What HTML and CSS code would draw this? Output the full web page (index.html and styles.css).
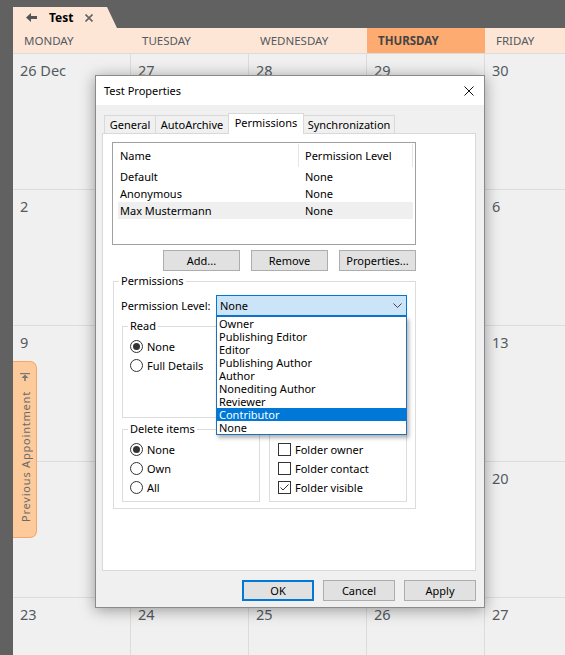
FILE: index.html
```html
<!DOCTYPE html>
<html>
<head>
<meta charset="utf-8">
<link rel="stylesheet" href="styles.css">
</head>
<body>
<div class="app">
  <div class="topbar">
    <div class="doctab">
      <svg class="back" viewBox="0 0 11 9"><path d="M0 4.5 L5 0 L5 3 L11 3 L11 6 L5 6 L5 9 Z" fill="#555"/></svg>
      <span class="doctab-title">Test</span>
      <svg class="doctab-close" viewBox="0 0 8 8"><path d="M0.5 0.5 L7.5 7.5 M7.5 0.5 L0.5 7.5" stroke="#666" stroke-width="1.7"/></svg>
    </div>
  </div>
  <div class="cal">
    <div class="dayname">MONDAY</div>
    <div class="dayname">TUESDAY</div>
    <div class="dayname">WEDNESDAY</div>
    <div class="dayname today">THURSDAY</div>
    <div class="dayname">FRIDAY</div>

    <div class="cell">26 Dec</div>
    <div class="cell">27</div>
    <div class="cell">28</div>
    <div class="cell">29</div>
    <div class="cell last">30</div>

    <div class="cell">2</div>
    <div class="cell"></div>
    <div class="cell"></div>
    <div class="cell"></div>
    <div class="cell last">6</div>

    <div class="cell">9</div>
    <div class="cell"></div>
    <div class="cell"></div>
    <div class="cell"></div>
    <div class="cell last">13</div>

    <div class="cell"></div>
    <div class="cell"></div>
    <div class="cell"></div>
    <div class="cell"></div>
    <div class="cell last">20</div>

    <div class="cell">23</div>
    <div class="cell">24</div>
    <div class="cell">25</div>
    <div class="cell">26</div>
    <div class="cell last">27</div>
  </div>

  <div class="sidetab">
    <svg class="sidetab-icon" viewBox="0 0 10 8"><path d="M0 0.6 H10" stroke="#777" stroke-width="1.2"/><path d="M5 1.6 L1.5 5 H4.2 V8 H5.8 V5 H8.5 Z" fill="#777"/></svg>
    <span class="sidetab-text">Previous Appointment</span>
  </div>

  <div class="dialog">
    <div class="titlebar">
      <span class="title">Test Properties</span>
      <svg class="close" viewBox="0 0 10 10"><path d="M0.5 0.5 L9.5 9.5 M9.5 0.5 L0.5 9.5" stroke="#111" stroke-width="1"/></svg>
    </div>
    <div class="dbody">
      <div class="tabs">
        <div class="tab w-general">General</div>
        <div class="tab w-auto">AutoArchive</div>
        <div class="tab sel w-perm">Permissions</div>
        <div class="tab w-sync">Synchronization</div>
      </div>
      <div class="panel">
        <div class="content">
          <div class="list">
            <div class="lhead">
              <div class="lh1">Name</div>
              <div class="lh2">Permission Level</div>
            </div>
            <div class="lrow"><div class="lc1">Default</div><div class="lc2">None</div></div>
            <div class="lrow"><div class="lc1">Anonymous</div><div class="lc2">None</div></div>
            <div class="lrow hl"><div class="lc1">Max Mustermann</div><div class="lc2">None</div></div>
          </div>
          <div class="btnrow">
            <div class="btn">Add...</div>
            <div class="btn">Remove</div>
            <div class="btn">Properties...</div>
          </div>
          <fieldset class="grp perms">
            <legend>Permissions</legend>
            <div class="levelrow">
              <span class="levlabel">Permission Level:</span>
              <div class="combo">
                <span>None</span>
                <svg class="chev" viewBox="0 0 9 5"><path d="M0.5 0.5 L4.5 4.5 L8.5 0.5" stroke="#444" fill="none" stroke-width="1"/></svg>
                <div class="droplist">
                  <div class="ditem">Owner</div>
                  <div class="ditem">Publishing Editor</div>
                  <div class="ditem">Editor</div>
                  <div class="ditem">Publishing Author</div>
                  <div class="ditem">Author</div>
                  <div class="ditem">Nonediting Author</div>
                  <div class="ditem">Reviewer</div>
                  <div class="ditem on">Contributor</div>
                  <div class="ditem">None</div>
                </div>
              </div>
            </div>
            <div class="groups">
              <fieldset class="grp sub tall">
                <legend>Read</legend>
                <div class="opts">
                  <div class="opt"><span class="radio on"></span>None</div>
                  <div class="opt"><span class="radio"></span>Full Details</div>
                </div>
              </fieldset>
              <fieldset class="grp sub tall plain"></fieldset>
              <fieldset class="grp sub short">
                <legend>Delete items</legend>
                <div class="opts">
                  <div class="opt"><span class="radio on"></span>None</div>
                  <div class="opt"><span class="radio"></span>Own</div>
                  <div class="opt"><span class="radio"></span>All</div>
                </div>
              </fieldset>
              <fieldset class="grp sub short plain">
                <div class="opts cb">
                  <div class="opt"><span class="check"></span>Folder owner</div>
                  <div class="opt"><span class="check"></span>Folder contact</div>
                  <div class="opt"><span class="check on"><svg viewBox="0 0 11 11"><path d="M1.5 5.5 L4 8 L9.5 2.5" stroke="#333" fill="none" stroke-width="1"/></svg></span>Folder visible</div>
                </div>
              </fieldset>
            </div>
          </fieldset>
        </div>
      </div>
      <div class="dlgbtns">
        <div class="btn dbtn default">OK</div>
        <div class="btn dbtn">Cancel</div>
        <div class="btn dbtn">Apply</div>
      </div>
    </div>
  </div>
</div>
</body>
</html>
```

FILE: styles.css
```css
* { box-sizing: border-box; }
html, body { margin: 0; padding: 0; }
body {
  width: 565px;
  height: 655px;
  overflow: hidden;
  background: #616161;
  font-family: "Noto Sans", "Open Sans", sans-serif;
}
.app {
  position: relative;
  width: 565px;
  height: 655px;
  display: flex;
  flex-direction: column;
}

/* top document tab */
.topbar {
  flex: none;
  height: 28px;
  padding-left: 13px;
  display: flex;
  align-items: flex-end;
}
.doctab {
  width: 104px;
  height: 21px;
  background: #fde6d6;
  clip-path: polygon(0 0, 94px 0, 104px 100%, 0 100%);
  display: flex;
  align-items: center;
  padding-left: 13px;
}
.back { width: 11px; height: 9px; margin-right: 12px; }
.doctab-title { font-weight: bold; font-size: 12px; color: #000; line-height: 14px; }
.doctab-close { width: 8px; height: 8px; margin-left: 12px; }

/* calendar */
.cal {
  flex: 1;
  margin-left: 13px;
  display: grid;
  grid-template-columns: repeat(4, 118px) 1fr;
  grid-template-rows: 25px repeat(5, 136px);
  background: #f0f0f0;
  overflow: hidden;
}
.dayname {
  background: #fde6d6;
  color: #545a62;
  font-size: 11.5px;
  line-height: 25px;
  padding-left: 11px;
}
.dayname.today {
  background: #fdab70;
  font-weight: bold;
  color: #444;
}
.cell {
  border-top: 1px solid #dcdcdc;
  border-right: 1px solid #dcdcdc;
  padding: 7px 0 0 7px;
  font-size: 14.5px;
  line-height: 18px;
  color: #555a60;
}
.cell.last { border-right: none; }

/* side tab */
.sidetab {
  position: absolute;
  left: 13px;
  top: 361px;
  width: 24px;
  height: 177px;
  background: #fdca9c;
  border: 1px solid #f6a766;
  border-left: none;
  border-radius: 0 7px 7px 0;
  display: flex;
  flex-direction: column;
  align-items: center;
  padding-top: 11px;
}
.sidetab-icon { width: 10px; height: 8px; margin-left: 1px; }
.sidetab-text {
  margin-top: 10px;
  writing-mode: vertical-rl;
  transform: rotate(180deg);
  font-size: 11px;
  letter-spacing: 0.8px;
  color: #6a6a6a;
  margin-left: 1px;
}

/* dialog */
.dialog {
  position: absolute;
  left: 95px;
  top: 75px;
  width: 390px;
  height: 533px;
  border: 1px solid #8a8a8a;
  background: #f0f0f0;
  box-shadow: 0 2px 14px rgba(0, 0, 0, 0.38);
  display: flex;
  flex-direction: column;
  font-size: 11px;
  color: #000;
}
.titlebar {
  flex: none;
  height: 29px;
  background: #fff;
  display: flex;
  align-items: center;
  justify-content: space-between;
  padding-left: 8px;
}
.title { font-size: 11px; line-height: 14px; }
.close { width: 10px; height: 10px; margin-right: 10px; }
.dbody {
  flex: 1;
  display: flex;
  flex-direction: column;
  padding: 8px 8px 6px 6px;
}
.tabs {
  flex: none;
  height: 20px;
  display: flex;
  align-items: flex-end;
  padding-left: 2px;
}
.tab {
  height: 18px;
  border: 1px solid #d9d9d9;
  border-bottom: none;
  background: #f0f0f0;
  text-align: center;
  line-height: 17px;
  margin-left: -1px;
}
.tab:first-child { margin-left: 0; }
.tab.sel {
  height: 21px;
  margin-bottom: -1px;
  background: #fff;
  position: relative;
  z-index: 1;
  line-height: 18px;
}
.w-general { width: 52px; }
.w-auto { width: 74px; }
.w-perm { width: 76px; }
.w-sync { width: 92px; }

.panel {
  flex: 1;
  border: 1px solid #d9d9d9;
  background: #fff;
  padding: 8px 0 0 9px;
}
.content {
  width: 304px;
  display: flex;
  flex-direction: column;
}
.list {
  height: 103px;
  border: 1px solid #a0a0a0;
  background: #fff;
}
.lhead {
  height: 25px;
  display: flex;
  align-items: center;
}
.lh1 {
  width: 186px;
  height: 23px;
  line-height: 23px;
  padding-left: 7px;
  border-right: 1px solid #e5e5e5;
}
.lh2 {
  width: 114px;
  height: 23px;
  line-height: 23px;
  padding-left: 6px;
  border-right: 1px solid #e5e5e5;
}
.lrow {
  height: 17px;
  margin-left: 5px;
  width: 295px;
  display: flex;
  align-items: center;
}
.lrow.hl { background: #efefef; }
.lc1 { width: 182px; padding-left: 2px; }
.lc2 { padding-left: 5px; }

.btnrow {
  margin-top: 5px;
  height: 21px;
  display: flex;
  justify-content: flex-end;
  gap: 11px;
}
.btn {
  width: 77px;
  height: 21px;
  background: #e1e1e1;
  border: 1px solid #adadad;
  display: flex;
  align-items: center;
  justify-content: center;
}

fieldset.grp {
  margin: 0;
  min-width: 0;
  border: 1px solid #dcdcdc;
  padding: 0;
}
fieldset.grp legend {
  margin-left: 5px;
  padding: 0 2px;
  line-height: 14px;
  font-size: 11px;
}
.perms {
  margin-top: 3px !important;
  margin-left: 1px !important;
  width: 303px;
  padding-bottom: 6px !important;
}
.levelrow {
  margin-top: 7px;
  height: 21px;
  display: flex;
  align-items: center;
  padding-left: 7px;
}
.levlabel { width: 95px; }
.combo {
  position: relative;
  width: 191px;
  height: 21px;
  border: 1px solid #0078d7;
  background: #cce4f7;
  display: flex;
  align-items: center;
  padding-left: 3px;
}
.chev { width: 9px; height: 5px; margin-left: auto; margin-right: 4px; }
.droplist {
  position: absolute;
  left: -1px;
  top: 20px;
  width: 191px;
  height: 119px;
  border: 1px solid #1e6fbf;
  background: #fff;
  box-shadow: 2px 3px 4px rgba(0, 0, 0, 0.3);
  z-index: 5;
}
.ditem {
  height: 13px;
  line-height: 13px;
  padding-left: 2px;
  white-space: nowrap;
}
.ditem.on { background: #0078d7; color: #fff; }

.groups {
  margin-top: 3px;
  display: grid;
  grid-template-columns: 138px 138px;
  column-gap: 9px;
  row-gap: 4px;
  padding: 0 7px 0 8px;
}
fieldset.sub.tall { height: 99px; }
fieldset.sub.short { height: 80px; }
fieldset.sub.plain { margin-top: 7px; }
fieldset.sub.tall.plain { height: 92px; }
fieldset.sub.short.plain { height: 73px; }
.opts {
  padding: 4px 0 0 7px;
}
.plain .opts { padding-top: 10px; }
.opts.cb { padding-left: 8px; }
.opt {
  height: 19px;
  display: flex;
  align-items: center;
  gap: 4px;
  white-space: nowrap;
}
.radio {
  width: 13px;
  height: 13px;
  border: 1px solid #333;
  border-radius: 50%;
  background: #fff;
  display: grid;
  place-items: center;
  flex: none;
}
.radio.on::after {
  content: "";
  width: 7px;
  height: 7px;
  border-radius: 50%;
  background: #333;
}
.check {
  width: 13px;
  height: 13px;
  border: 1px solid #333;
  background: #fff;
  flex: none;
  display: grid;
  place-items: center;
}
.check svg { width: 11px; height: 11px; }

.dlgbtns {
  flex: none;
  margin-top: 9px;
  height: 21px;
  display: flex;
  justify-content: flex-end;
  gap: 9px;
}
.dbtn { width: 72px; }
.dbtn.default { border: 2px solid #0078d7; }
```
